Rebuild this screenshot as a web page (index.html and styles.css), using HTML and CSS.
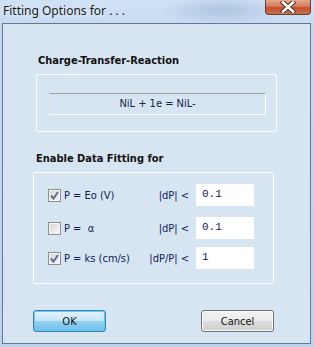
FILE: index.html
```html
<!DOCTYPE html>
<html lang="en">
<head>
    <meta charset="UTF-8">
    <meta name="viewport" content="width=device-width, initial-scale=1.0">
    <title>Fitting Options</title>
    <link rel="stylesheet" href="styles.css">
</head>
<body>
    <div class="window">
        <div class="titlebar">
            <span class="title">Fitting Options for . . .</span>
            <div class="close">
                <svg width="18" height="12" viewBox="0 0 18 12">
                    <path d="M4 1.5 L14 10.5 M14 1.5 L4 10.5" stroke="#4a3a36" stroke-width="4.6" stroke-linecap="square" fill="none"/>
                    <path d="M4 1.5 L14 10.5 M14 1.5 L4 10.5" stroke="#ffffff" stroke-width="2.6" stroke-linecap="square" fill="none"/>
                </svg>
            </div>
        </div>

        <div class="client">
            <div class="group-title reaction-title">Charge-Transfer-Reaction</div>
            <div class="groupbox reaction">
                <div class="equation">NiL + 1e = NiL-</div>
            </div>

            <div class="group-title">Enable Data Fitting for</div>
            <div class="groupbox fitting">
                <div class="row">
                    <label class="check"><span class="box checked"></span>P = Eo (V)</label>
                    <span class="limit">|dP| &lt;</span>
                    <input class="value" type="text" value="0.1">
                </div>
                <div class="row second">
                    <label class="check"><span class="box"></span>P =&nbsp;&nbsp;α</label>
                    <span class="limit">|dP| &lt;</span>
                    <input class="value" type="text" value="0.1">
                </div>
                <div class="row third">
                    <label class="check"><span class="box checked"></span>P = ks (cm/s)</label>
                    <span class="limit">|dP/P| &lt;</span>
                    <input class="value" type="text" value="1">
                </div>
            </div>

            <div class="buttons">
                <button class="btn default">OK</button>
                <button class="btn">Cancel</button>
            </div>
        </div>
    </div>
</body>
</html>
```

FILE: styles.css
```css
body {
    margin: 0;
    font-family: "DejaVu Sans Condensed", "DejaVu Sans", sans-serif;
    font-size: 11px;
}
.window {
    width: 314px;
    height: 347px;
    box-sizing: border-box;
    background:
        radial-gradient(ellipse 60px 14px at 222px 10px, rgba(160,185,215,0.7), rgba(160,185,215,0)),
        linear-gradient(to bottom, #cfe1f5 0px, #c4d9f1 30px, #bcd3ee 347px);
    overflow: hidden;
}
.titlebar {
    height: 23px;
    display: flex;
    justify-content: space-between;
    align-items: flex-start;
}
.title {
    font-family: "Noto Sans", sans-serif;
    font-size: 12px;
    color: #1a1a1a;
    margin: 2px 0 0 3px;
    text-shadow: 0 0 6px #ffffff;
}
.close {
    width: 44px;
    height: 14px;
    margin-right: 3px;
    border: 1px solid #6a3e30;
    border-top: none;
    border-radius: 0 0 4px 4px;
    background: linear-gradient(to bottom, #e8a88e 0%, #d87a58 45%, #c0502e 55%, #d07048 100%);
    display: flex;
    justify-content: center;
    align-items: center;
}
.client {
    height: 321px;
    margin: 0 3px 0 2px;
    box-sizing: border-box;
    border: 1px solid #66788b;
    background: #d7e4f2;
}
.group-title {
    font-weight: bold;
    color: #111111;
    line-height: 13px;
    margin: 20px 0 7px 33px;
}
.reaction-title {
    margin-top: 30px;
    margin-left: 35px;
}
.groupbox {
    box-sizing: border-box;
    width: 241px;
    border: 1px solid #ffffff;
    border-radius: 2px;
}
.reaction {
    margin-left: 33px;
    padding: 18px 10px 16px 12px;
}
.equation {
    box-sizing: border-box;
    height: 22px;
    border-top: 1px solid #a0a0a0;
    border-left: 1px solid #e2e2e2;
    border-right: 1px solid #ffffff;
    border-bottom: 1px solid #ffffff;
    text-align: center;
    line-height: 20px;
    color: #161f45;
}
.fitting {
    margin-left: 30px;
    padding: 11px 19px 14px 14px;
}
.row {
    display: grid;
    grid-template-columns: 1fr auto 58px;
    column-gap: 7px;
    align-items: center;
    height: 22px;
    color: #10205a;
}
.row.second {
    margin-top: 11px;
}
.row.third {
    margin-top: 8px;
}
.check {
    display: flex;
    align-items: center;
    gap: 3px;
}
.box {
    width: 13px;
    height: 13px;
    box-sizing: border-box;
    border: 1px solid #8e8f8f;
    background: linear-gradient(135deg, #d6d6d6, #f6f6f6);
    box-shadow: inset 0 0 0 1px #f4f4f4;
}
.box.checked {
    background:
        url("data:image/svg+xml,%3Csvg xmlns='http://www.w3.org/2000/svg' width='11' height='11'%3E%3Cpath d='M2 5.5 L4.5 8.5 L9 2' stroke='%235c6f92' stroke-width='2' fill='none'/%3E%3C/svg%3E") center no-repeat,
        linear-gradient(135deg, #d6d6d6, #f6f6f6);
}
.limit {
    text-align: right;
}
.value {
    box-sizing: border-box;
    width: 58px;
    height: 22px;
    border: 1px solid #ffffff;
    background: #ffffff;
    padding: 0 0 3px 5px;
    font-family: "Liberation Mono", monospace;
    font-size: 11px;
    color: #10205a;
    outline: none;
}
.buttons {
    display: flex;
    gap: 95px;
    margin: 26px 0 0 30px;
}
.btn {
    width: 73px;
    height: 22px;
    box-sizing: border-box;
    border: 1px solid #707070;
    border-radius: 3px;
    font-family: "DejaVu Sans Condensed", "DejaVu Sans", sans-serif;
    font-size: 11px;
    color: #111111;
    background: linear-gradient(to bottom, #f2f2f2 0%, #ebebeb 50%, #dddddd 51%, #cfcfcf 100%);
    box-shadow: inset 0 0 0 1px #fafafa;
}
.btn.default {
    border-color: #3c7fb1;
    background: linear-gradient(to bottom, #e5f4fc 0%, #c4e5f6 50%, #98d1ef 51%, #6cc0ee 100%);
    box-shadow: inset 0 0 0 1px #5ecbf5;
}
```
